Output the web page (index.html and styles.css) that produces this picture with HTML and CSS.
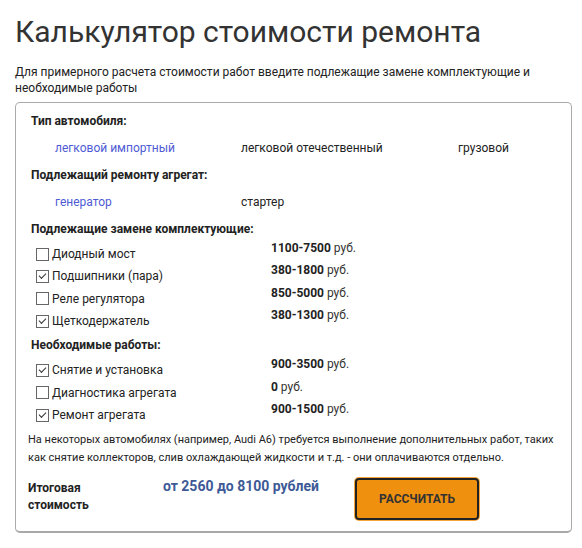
FILE: index.html
```html
<!DOCTYPE html>
<html lang="ru">
<head>
<meta charset="utf-8">
<title>Калькулятор стоимости ремонта</title>
<link rel="stylesheet" href="styles.css">
</head>
<body>
<div class="page">
  <h1 class="title">Калькулятор стоимости ремонта</h1>
  <p class="intro">Для примерного расчета стоимости работ введите подлежащие замене комплектующие и необходимые работы</p>
  <div class="calc">
    <div class="heading">Тип автомобиля:</div>
    <div class="options">
      <span class="opt active">легковой импортный</span>
      <span class="opt">легковой отечественный</span>
      <span class="opt">грузовой</span>
    </div>
    <div class="heading">Подлежащий ремонту агрегат:</div>
    <div class="options">
      <span class="opt active">генератор</span>
      <span class="opt">стартер</span>
    </div>
    <div class="heading">Подлежащие замене комплектующие:</div>
    <div class="items">
      <div class="item"><label class="lbl"><span class="cb"></span>Диодный мост</label><span class="price"><b>1100-7500</b> руб.</span></div>
      <div class="item"><label class="lbl"><span class="cb checked"></span>Подшипники (пара)</label><span class="price"><b>380-1800</b> руб.</span></div>
      <div class="item"><label class="lbl"><span class="cb"></span>Реле регулятора</label><span class="price"><b>850-5000</b> руб.</span></div>
      <div class="item"><label class="lbl"><span class="cb checked"></span>Щеткодержатель</label><span class="price"><b>380-1300</b> руб.</span></div>
    </div>
    <div class="heading">Необходимые работы:</div>
    <div class="items">
      <div class="item"><label class="lbl"><span class="cb checked"></span>Снятие и установка</label><span class="price"><b>900-3500</b> руб.</span></div>
      <div class="item"><label class="lbl"><span class="cb"></span>Диагностика агрегата</label><span class="price"><b>0</b> руб.</span></div>
      <div class="item"><label class="lbl"><span class="cb checked"></span>Ремонт агрегата</label><span class="price"><b>900-1500</b> руб.</span></div>
    </div>
    <p class="note">На некоторых автомобилях (например, Audi A6) требуется выполнение дополнительных работ, таких как снятие коллекторов, слив охлаждающей жидкости и т.д. - они оплачиваются отдельно.</p>
    <div class="total">
      <div class="total-label">Итоговая<br>стоимость</div>
      <div class="total-value">от 2560 до 8100 рублей</div>
      <button class="btn" type="button">РАССЧИТАТЬ</button>
    </div>
  </div>
</div>
</body>
</html>
```
FILE: styles.css
```css
html, body {
  margin: 0;
  padding: 0;
  background: #fff;
}
body {
  font-family: Roboto, "Liberation Sans", Arial, sans-serif;
  color: #222;
}
.page {
  padding: 14px 10px 0 15px;
}
.title {
  margin: 0;
  font-size: 30px;
  font-weight: 400;
  line-height: 36px;
  color: #333;
}
.intro {
  margin: 14px 0 0;
  font-size: 12px;
  line-height: 16px;
}
.calc {
  margin-top: 6px;
  width: 557px;
  box-sizing: border-box;
  border: 1px solid #aaa;
  border-bottom: 2px solid #a8a8a8;
  border-radius: 5px;
  padding: 9px 15px 11px 15px;
}
.heading {
  font-size: 12px;
  font-weight: 700;
  line-height: 18px;
}
.options {
  display: grid;
  grid-template-columns: 186px 217px auto;
  padding-left: 24px;
  margin: 9px 0 9px;
  font-size: 12px;
  line-height: 18px;
}
.opt.active {
  color: #4f5bd5;
}
.items {
  margin: 2px 0 7px;
}
.item {
  display: grid;
  grid-template-columns: 240px auto;
  height: 22.33px;
}
.lbl {
  display: flex;
  align-items: center;
  padding-left: 5px;
  padding-top: 6px;
  line-height: 16px;
  font-size: 12px;
}
.cb {
  width: 11px;
  height: 11px;
  border: 1px solid #666;
  background: #fff;
  margin-right: 3px;
  position: relative;
  flex: none;
}
.cb.checked::after {
  content: "";
  position: absolute;
  left: 2px;
  top: 2px;
  width: 6px;
  height: 3px;
  border-left: 1.3px solid #333;
  border-bottom: 1.3px solid #333;
  transform: rotate(-45deg);
}
.price {
  line-height: 16px;
  font-size: 12px;
  color: #333;
}
.price b {
  color: #222;
}
.note {
  margin: 8px 0 0 -3px;
  font-size: 11px;
  line-height: 18px;
}
.total {
  display: flex;
  align-items: flex-start;
  margin: 10px 0 0 -3px;
}
.total-label {
  width: 135px;
  font-size: 12px;
  font-weight: 700;
  line-height: 17px;
  padding-top: 3px;
}
.total-value {
  width: 192px;
  font-size: 14px;
  font-weight: 700;
  color: #3d5a96;
  line-height: 18px;
}
.btn {
  margin-top: 1px;
  width: 124px;
  height: 42px;
  border: 2px solid #222;
  border-radius: 4px;
  background: #f0900f;
  box-shadow: 0 0 0 1px #f5a53a;
  font-family: Roboto, "Liberation Sans", Arial, sans-serif;
  font-size: 12px;
  font-weight: 700;
  color: #333;
  padding: 0;
}
```
